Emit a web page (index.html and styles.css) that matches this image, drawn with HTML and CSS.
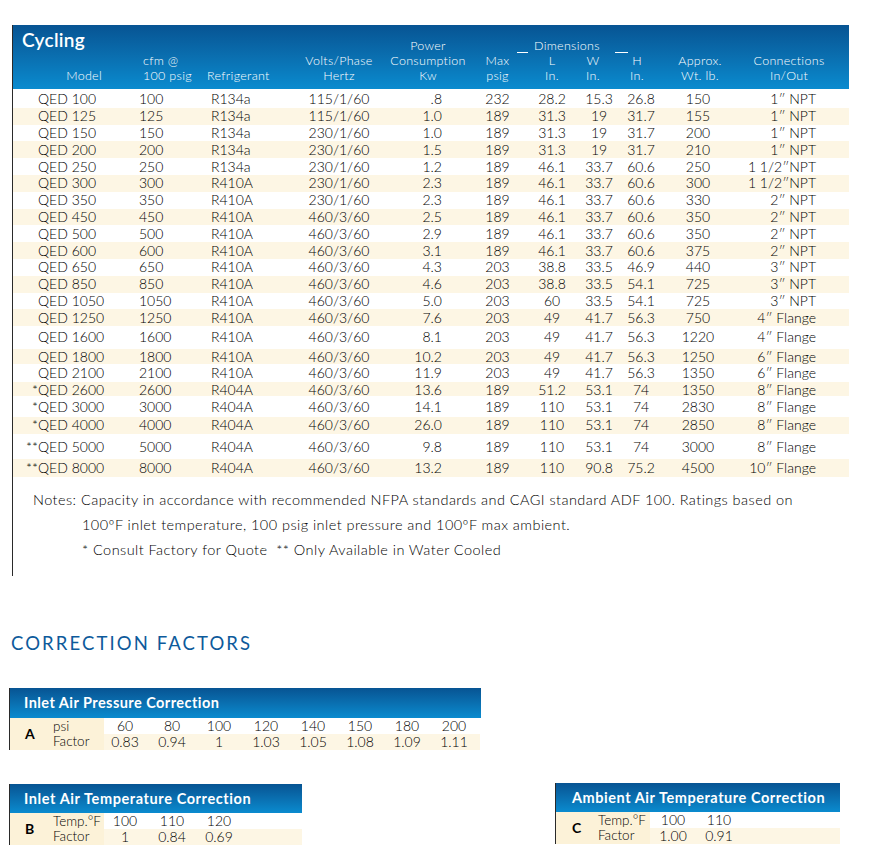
FILE: index.html
```html
<!DOCTYPE html>
<html>
<head>
<meta charset="utf-8">
<link rel="stylesheet" href="styles.css">
</head>
<body>
<div class="spec">
  <div class="head">
    <div class="h-title">Cycling</div>
    <div class="h c5 r1 pow">Power</div>
    <div class="dims"><span class="uline u1"></span><span>Dimensions</span><span class="uline u2"></span></div>
    <div class="h c1 r3 model">Model</div>
    <div class="h c2 r2 cfm">cfm @</div>
    <div class="h c2 r3 cfm">100 psig</div>
    <div class="h c3 r3 ref">Refrigerant</div>
    <div class="h c4 r2">Volts/Phase</div>
    <div class="h c4 r3">Hertz</div>
    <div class="h c5 r2 pow">Consumption</div>
    <div class="h c5 r3 pow">Kw</div>
    <div class="h c6 r2">Max</div>
    <div class="h c6 r3">psig</div>
    <div class="h c7 r2">L</div>
    <div class="h c7 r3">In.</div>
    <div class="h c8 r2 hw">W</div>
    <div class="h c8 r3 hw">In.</div>
    <div class="h c9 r2 hh">H</div>
    <div class="h c9 r3 hh">In.</div>
    <div class="h c10 r2 wt">Approx.</div>
    <div class="h c10 r3 wt">Wt. lb.</div>
    <div class="h c11 r2 con">Connections</div>
    <div class="h c11 r3 con">In/Out</div>
  </div>
  <div class="rows">
    <div class="row"><span>QED 100</span><span>100</span><span>R134a</span><span>115/1/60</span><span>.8</span><span>232</span><span>28.2</span><span>15.3</span><span>26.8</span><span>150</span><span>1″ NPT</span></div>
    <div class="row"><span>QED 125</span><span>125</span><span>R134a</span><span>115/1/60</span><span>1.0</span><span>189</span><span>31.3</span><span>19</span><span>31.7</span><span>155</span><span>1″ NPT</span></div>
    <div class="row"><span>QED 150</span><span>150</span><span>R134a</span><span>230/1/60</span><span>1.0</span><span>189</span><span>31.3</span><span>19</span><span>31.7</span><span>200</span><span>1″ NPT</span></div>
    <div class="row"><span>QED 200</span><span>200</span><span>R134a</span><span>230/1/60</span><span>1.5</span><span>189</span><span>31.3</span><span>19</span><span>31.7</span><span>210</span><span>1″ NPT</span></div>
    <div class="row"><span>QED 250</span><span>250</span><span>R134a</span><span>230/1/60</span><span>1.2</span><span>189</span><span>46.1</span><span>33.7</span><span>60.6</span><span>250</span><span>1 1/2″NPT</span></div>
    <div class="row"><span>QED 300</span><span>300</span><span>R410A</span><span>230/1/60</span><span>2.3</span><span>189</span><span>46.1</span><span>33.7</span><span>60.6</span><span>300</span><span>1 1/2″NPT</span></div>
    <div class="row"><span>QED 350</span><span>350</span><span>R410A</span><span>230/1/60</span><span>2.3</span><span>189</span><span>46.1</span><span>33.7</span><span>60.6</span><span>330</span><span>2″ NPT</span></div>
    <div class="row"><span>QED 450</span><span>450</span><span>R410A</span><span>460/3/60</span><span>2.5</span><span>189</span><span>46.1</span><span>33.7</span><span>60.6</span><span>350</span><span>2″ NPT</span></div>
    <div class="row"><span>QED 500</span><span>500</span><span>R410A</span><span>460/3/60</span><span>2.9</span><span>189</span><span>46.1</span><span>33.7</span><span>60.6</span><span>350</span><span>2″ NPT</span></div>
    <div class="row"><span>QED 600</span><span>600</span><span>R410A</span><span>460/3/60</span><span>3.1</span><span>189</span><span>46.1</span><span>33.7</span><span>60.6</span><span>375</span><span>2″ NPT</span></div>
    <div class="row"><span>QED 650</span><span>650</span><span>R410A</span><span>460/3/60</span><span>4.3</span><span>203</span><span>38.8</span><span>33.5</span><span>46.9</span><span>440</span><span>3″ NPT</span></div>
    <div class="row"><span>QED 850</span><span>850</span><span>R410A</span><span>460/3/60</span><span>4.6</span><span>203</span><span>38.8</span><span>33.5</span><span>54.1</span><span>725</span><span>3″ NPT</span></div>
    <div class="row"><span>QED 1050</span><span>1050</span><span>R410A</span><span>460/3/60</span><span>5.0</span><span>203</span><span>60</span><span>33.5</span><span>54.1</span><span>725</span><span>3″ NPT</span></div>
    <div class="row"><span>QED 1250</span><span>1250</span><span>R410A</span><span>460/3/60</span><span>7.6</span><span>203</span><span>49</span><span>41.7</span><span>56.3</span><span>750</span><span>4″ Flange</span></div>
    <div class="row h15"><span>QED 1600</span><span>1600</span><span>R410A</span><span>460/3/60</span><span>8.1</span><span>203</span><span>49</span><span>41.7</span><span>56.3</span><span>1220</span><span>4″ Flange</span></div>
    <div class="row h16"><span>QED 1800</span><span>1800</span><span>R410A</span><span>460/3/60</span><span>10.2</span><span>203</span><span>49</span><span>41.7</span><span>56.3</span><span>1250</span><span>6″ Flange</span></div>
    <div class="row h17"><span>QED 2100</span><span>2100</span><span>R410A</span><span>460/3/60</span><span>11.9</span><span>203</span><span>49</span><span>41.7</span><span>56.3</span><span>1350</span><span>6″ Flange</span></div>
    <div class="row h18"><span><i class="ast">*</i>QED 2600</span><span>2600</span><span>R404A</span><span>460/3/60</span><span>13.6</span><span>189</span><span>51.2</span><span>53.1</span><span>74</span><span>1350</span><span>8″ Flange</span></div>
    <div class="row h19"><span><i class="ast">*</i>QED 3000</span><span>3000</span><span>R404A</span><span>460/3/60</span><span>14.1</span><span>189</span><span>110</span><span>53.1</span><span>74</span><span>2830</span><span>8″ Flange</span></div>
    <div class="row h20"><span><i class="ast">*</i>QED 4000</span><span>4000</span><span>R404A</span><span>460/3/60</span><span>26.0</span><span>189</span><span>110</span><span>53.1</span><span>74</span><span>2850</span><span>8″ Flange</span></div>
    <div class="row h21"><span><i class="ast2">**</i>QED 5000</span><span>5000</span><span>R404A</span><span>460/3/60</span><span>9.8</span><span>189</span><span>110</span><span>53.1</span><span>74</span><span>3000</span><span>8″ Flange</span></div>
    <div class="row h22"><span><i class="ast2">**</i>QED 8000</span><span>8000</span><span>R404A</span><span>460/3/60</span><span>13.2</span><span>189</span><span>110</span><span>90.8</span><span>75.2</span><span>4500</span><span>10″ Flange</span></div>
  </div>
  <div class="notes">
    <p>Notes: Capacity in accordance with recommended NFPA standards and CAGI standard ADF 100. Ratings based on</p>
    <p class="ind">100ºF inlet temperature, 100 psig inlet pressure and 100ºF max ambient.</p>
    <p class="ind">* Consult Factory for Quote&nbsp; ** Only Available in Water Cooled</p>
  </div>
</div>

<h2 class="cf-title">CORRECTION FACTORS</h2>

<div class="box box-a">
  <div class="box-head">Inlet Air Pressure Correction</div>
  <div class="box-body cols8">
    <div class="lab"><b>A</b><div class="labs"><span>psi</span><span>Factor</span></div></div>
    <span class="v">60</span><span class="v">80</span><span class="v">100</span><span class="v">120</span><span class="v">140</span><span class="v">150</span><span class="v">180</span><span class="v">200</span>
    <span class="v c">0.83</span><span class="v c">0.94</span><span class="v c">1</span><span class="v c">1.03</span><span class="v c">1.05</span><span class="v c">1.08</span><span class="v c">1.09</span><span class="v c">1.11</span>
  </div>
</div>

<div class="pair">
  <div class="box box-b">
    <div class="box-head">Inlet Air Temperature Correction</div>
    <div class="box-body cols3">
      <div class="lab"><b>B</b><div class="labs"><span>Temp.°F</span><span>Factor</span></div></div>
      <span class="v">100</span><span class="v">110</span><span class="v">120</span><span class="v"></span>
      <span class="v c">1</span><span class="v c">0.84</span><span class="v c">0.69</span><span class="v c"></span>
    </div>
  </div>
  <div class="box box-c">
    <div class="box-head">Ambient Air Temperature Correction</div>
    <div class="box-body cols2">
      <div class="lab"><b>C</b><div class="labs"><span>Temp.°F</span><span>Factor</span></div></div>
      <span class="v">100</span><span class="v">110</span><span class="v"></span>
      <span class="v c">1.00</span><span class="v c">0.91</span><span class="v c"></span>
    </div>
  </div>
</div>
</body>
</html>
```

FILE: styles.css
```css
* { box-sizing: border-box; }
html, body { margin: 0; padding: 0; background: #fff; }
body {
  font-family: "Lato", "Liberation Sans", sans-serif;
  font-weight: 300;
  color: #000;
  width: 890px;
  height: 858px;
  overflow: hidden;
}

.spec {
  margin: 25px 0 0 12px;
  width: 837px;
  border-left: 1px solid #2a2a2a;
  padding-bottom: 14px;
}

.head, .row {
  display: grid;
  grid-template-columns: 117px 75px 95px 78px 92px 55px 54px 40px 44px 70px 116px;
}

.head {
  height: 64px;
  padding: 4px 0 6px;
  grid-template-rows: 24px 15px 15px;
  background: linear-gradient(to bottom, #075493 0%, #0a6fb0 50%, #0a8bcf 100%);
  color: #fff;
}

.h-title {
  grid-column: 1 / 4;
  grid-row: 1;
  align-self: center;
  padding-left: 9px;
  font-size: 19px;
  font-weight: 600;
  letter-spacing: 0.3px;
  line-height: 22px;
  margin-top: -2px;
}

.h {
  font-size: 12.5px;
  line-height: 15px;
  text-align: center;
  white-space: nowrap;
  letter-spacing: 0.3px;
}
.r1 { grid-row: 1; align-self: end; }
.r2 { grid-row: 2; }
.r3 { grid-row: 3; }
.c1 { grid-column: 1; } .c2 { grid-column: 2; } .c3 { grid-column: 3; }
.c4 { grid-column: 4; } .c5 { grid-column: 5; } .c6 { grid-column: 6; }
.c7 { grid-column: 7; } .c8 { grid-column: 8; } .c9 { grid-column: 9; }
.c10 { grid-column: 10; } .c11 { grid-column: 11; }

.h.model { text-align: right; padding-right: 28px; }
.h.cfm { text-align: left; padding-left: 13px; }
.h.ref { text-align: left; padding-left: 2px; }
.h.pow { padding-left: 8px; }
.h.hw { padding-right: 12px; }
.h.hh { padding-right: 8px; }
.h.wt { padding-left: 4px; }
.h.con { padding-right: 4px; }

.dims {
  grid-column: 7 / 10;
  grid-row: 1;
  align-self: end;
  display: flex;
  align-items: flex-end;
  margin-left: -8px;
  font-size: 12.5px;
  line-height: 15px;
  letter-spacing: 0.3px;
  white-space: nowrap;
}
.uline {
  display: inline-block;
  border-bottom: 1px solid #fff;
  height: 12px;
}
.u1 { width: 11px; margin-right: 6px; }
.u2 { width: 13px; margin-left: 15px; }

.rows { padding-top: 2px; }
.row {
  height: 16.8px;
  align-items: center;
  font-size: 14px;
  line-height: 16px;
  white-space: nowrap;
}
.row:nth-child(even) { background: #fdf6e4; }
.row > span { text-align: center; }
.row > span:nth-child(1) { text-align: left; padding-left: 25px; }
.row > span:nth-child(2) { text-align: left; padding-left: 9px; }
.row > span:nth-child(3) { text-align: left; padding-left: 6px; }
.row > span:nth-child(5) { text-align: right; padding-right: 28px; }
.row > span:nth-child(11) { text-align: right; padding-right: 33px; }

.row.h15 { height: 22.5px; }
.row.h16 { height: 15.8px; }
.row.h17 { height: 17.7px; }
.row.h18 { height: 14px; }
.row.h19 { height: 21px; }
.row.h20 { height: 16.6px; }
.row.h21 { height: 25.7px; }
.row.h22 { height: 17.7px; }

.ast, .ast2 {
  font-style: normal;
  display: inline-block;
  text-align: right;
}
.ast { width: 9px; margin-left: -9px; }
.ast2 { width: 16px; margin-left: -16px; }

.notes {
  padding-top: 10px;
  font-size: 14.5px;
  letter-spacing: 0.45px;
}
.notes p {
  margin: 0;
  line-height: 25px;
  padding-left: 20px;
  white-space: nowrap;
}
.notes p.ind { padding-left: 69px; }

.cf-title {
  margin: 56px 0 0 11px;
  font-size: 18.5px;
  line-height: 22px;
  font-weight: 400;
  letter-spacing: 2.1px;
  color: #0d5a9b;
}

.box {
  border-left: 1px solid #2a2a2a;
}
.box-head {
  height: 30px;
  line-height: 30px;
  padding-left: 14px;
  color: #fff;
  font-weight: 700;
  font-size: 14.5px;
  letter-spacing: 0.45px;
  background: linear-gradient(to bottom, #075493 0%, #0a6fb0 50%, #0a8bcf 100%);
  white-space: nowrap;
}
.box-a { margin: 34px 0 0 9px; width: 472px; }

.box-body {
  display: grid;
  grid-template-rows: 16px 16px;
  font-size: 14px;
  line-height: 16px;
}
.cols8 { grid-template-columns: 94px repeat(8, 47px); }
.cols3 { grid-template-columns: 94px repeat(3, 47px) 1fr; }
.cols2 { grid-template-columns: 94px repeat(2, 46px) 1fr; }

.lab {
  grid-row: 1 / 3;
  grid-column: 1;
  background: #fcf2d8;
  display: flex;
  align-items: center;
  padding-left: 15px;
}
.lab b {
  font-weight: 700;
  width: 28px;
  font-size: 14px;
}
.labs {
  display: flex;
  flex-direction: column;
  font-size: 13.5px;
}
.labs span { line-height: 15px; }
.v {
  text-align: center;
  padding-right: 5px;
}
.v.c { background: #fdf6e4; }
.cols2 .v { padding-right: 0; }

.pair {
  display: flex;
  margin: 34px 0 0 9px;
  align-items: flex-start;
}
.box-b { width: 293px; }
.box-b .box-head { height: 29px; line-height: 29px; letter-spacing: 0.6px; }
.box-c { width: 285px; margin-left: 253px; margin-top: -1px; }
.box-c .box-head { height: 29px; line-height: 29px; padding-left: 16px; letter-spacing: 0.55px; }
.box-c .lab { padding-left: 16px; }
.box-c .lab b { width: 26px; }
```
